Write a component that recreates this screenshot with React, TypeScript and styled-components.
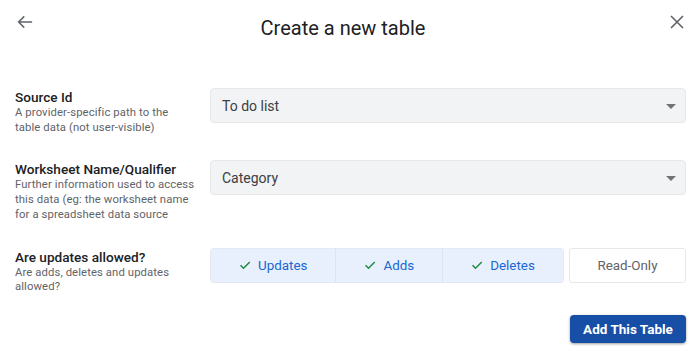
import React from "react";
import styled, { createGlobalStyle } from "styled-components";

const Global = createGlobalStyle`
  html, body { margin: 0; padding: 0; background: #ffffff; }
  body { font-family: Roboto, "Noto Sans", Arial, sans-serif; color: #202124; }
  * { box-sizing: border-box; }
`;

const Page = styled.div`
  width: 700px;
  height: 356px;
  display: flex;
  flex-direction: column;
  background: #fff;
  overflow: hidden;
`;

const Header = styled.header`
  height: 59px;
  display: grid;
  grid-template-columns: 40px 1fr 40px;
  align-items: start;
  padding: 8px 9px 0 11px;
`;

const IconButton = styled.button<{ $end?: boolean }>`
  width: 28px;
  height: 28px;
  border: none;
  background: transparent;
  padding: 0;
  display: flex;
  align-items: center;
  justify-content: center;
  color: #5f6368;
  cursor: pointer;
  justify-self: ${(p) => (p.$end ? "end" : "start")};
`;

const Title = styled.h1`
  margin: 0;
  padding: 6px 16px 0 0;
  text-align: center;
  font-size: 20px;
  font-weight: 400;
  line-height: 28px;
  color: #202124;
  -webkit-font-smoothing: antialiased;
`;

const Form = styled.div`
  display: flex;
  flex-direction: column;
  gap: 25px;
  padding: 29px 14px 0 15px;
`;

const Row = styled.div`
  display: grid;
  grid-template-columns: 195px 1fr;
  align-items: start;
`;

const LabelBlock = styled.div`
  display: flex;
  flex-direction: column;
  padding-top: 1px;
`;

const Label = styled.div`
  font-size: 13.6px;
  font-weight: 500;
  line-height: 17px;
  color: #202124;
`;

const HintLine = styled.span`
  display: block;
  font-size: 11.3px;
  line-height: 14.7px;
  letter-spacing: 0.1px;
  color: #5f6368;
  white-space: nowrap;
`;

const Select = styled.div`
  height: 35px;
  display: flex;
  align-items: center;
  justify-content: space-between;
  padding: 0 9px 0 11px;
  background: #f1f3f4;
  border: 1px solid #e6e8ea;
  border-radius: 4px;
  font-size: 14px;
  color: #3c4043;
`;

const Caret = styled.span`
  width: 0;
  height: 0;
  border-left: 5px solid transparent;
  border-right: 5px solid transparent;
  border-top: 5px solid #6f7378;
  margin-top: 2px;
`;

const ToggleRow = styled.div`
  display: flex;
  gap: 5px;
  height: 35px;
`;

const Group = styled.div`
  display: flex;
  border: 1px solid #e3e9f3;
  border-radius: 3px;
  overflow: hidden;
`;

const Segment = styled.div<{ $first?: boolean }>`
  display: flex;
  align-items: center;
  justify-content: center;
  gap: 7px;
  padding: 0 28px;
  background: #e8f0fe;
  border-left: ${(p) => (p.$first ? "none" : "1px solid #dce4f0")};
  color: #1967d2;
  font-size: 13.4px;
`;

const ReadOnly = styled.div`
  flex: 1;
  display: flex;
  align-items: center;
  justify-content: center;
  border: 1px solid #e6e8ea;
  border-radius: 3px;
  color: #5f6368;
  font-size: 13.4px;
`;

const Footer = styled.div`
  display: flex;
  justify-content: flex-end;
  padding: 20px 14px 0 0;
`;

const Primary = styled.button`
  height: 28px;
  width: 116px;
  border: none;
  border-radius: 4px;
  background: #174ea6;
  color: #fff;
  font-family: Roboto, Arial, sans-serif;
  font-size: 13.5px;
  font-weight: 700;
  box-shadow: 0 1px 3px rgba(60, 64, 67, 0.35), 0 1px 2px rgba(60, 64, 67, 0.2);
  cursor: pointer;
`;

const Check = () => (
  <svg width="12" height="12" viewBox="0 0 24 24" aria-hidden>
    <path d="M3 12.5l6 6L21.5 6" fill="none" stroke="#1e8e3e" strokeWidth="3" />
  </svg>
);

const ArrowLeft = () => (
  <svg width="18" height="18" viewBox="0 0 24 24" aria-hidden>
    <path d="M21.5 12H3.5M11 4.5L3.5 12l7.5 7.5" fill="none" stroke="#5f6368" strokeWidth="2" />
  </svg>
);

const Close = () => (
  <svg width="16" height="16" viewBox="0 0 24 24" aria-hidden>
    <path d="M3 3l18 18M21 3L3 21" fill="none" stroke="#5f6368" strokeWidth="2.4" />
  </svg>
);

const Hint = ({ lines }: { lines: string[] }) => (
  <>
    {lines.map((l) => (
      <HintLine key={l}>{l}</HintLine>
    ))}
  </>
);

const segments = ["Updates", "Adds", "Deletes"];

export default function App() {
  return (
    <Page>
      <Global />
      <Header>
        <IconButton aria-label="Back">
          <ArrowLeft />
        </IconButton>
        <Title>Create a new table</Title>
        <IconButton $end aria-label="Close">
          <Close />
        </IconButton>
      </Header>
      <Form>
        <Row>
          <LabelBlock>
            <Label>Source Id</Label>
            <Hint lines={["A provider-specific path to the", "table data (not user-visible)"]} />
          </LabelBlock>
          <Select>
            <span>To do list</span>
            <Caret />
          </Select>
        </Row>
        <Row>
          <LabelBlock>
            <Label>Worksheet Name/Qualifier</Label>
            <Hint
              lines={[
                "Further information used to access",
                "this data (eg: the worksheet name",
                "for a spreadsheet data source",
              ]}
            />
          </LabelBlock>
          <Select>
            <span>Category</span>
            <Caret />
          </Select>
        </Row>
        <Row>
          <LabelBlock>
            <Label>Are updates allowed?</Label>
            <Hint lines={["Are adds, deletes and updates", "allowed?"]} />
          </LabelBlock>
          <ToggleRow>
            <Group>
              {segments.map((s, i) => (
                <Segment key={s} $first={i === 0}>
                  <Check />
                  {s}
                </Segment>
              ))}
            </Group>
            <ReadOnly>Read-Only</ReadOnly>
          </ToggleRow>
        </Row>
      </Form>
      <Footer>
        <Primary>Add This Table</Primary>
      </Footer>
    </Page>
  );
}
